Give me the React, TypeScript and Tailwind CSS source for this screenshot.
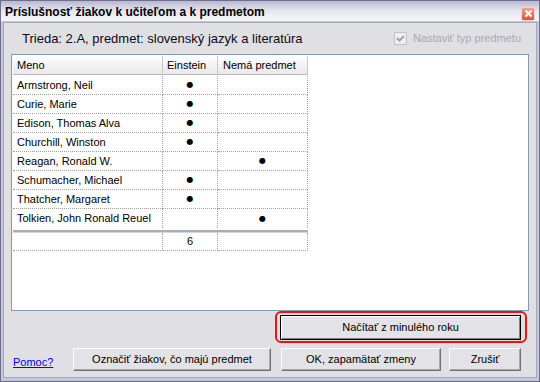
import type { ReactNode } from "react"

type Row = { name: string; einstein: boolean }

const rows: Row[] = [
  { name: "Armstrong, Neil", einstein: true },
  { name: "Curie, Marie", einstein: true },
  { name: "Edison, Thomas Alva", einstein: true },
  { name: "Churchill, Winston", einstein: true },
  { name: "Reagan, Ronald W.", einstein: false },
  { name: "Schumacher, Michael", einstein: true },
  { name: "Thatcher, Margaret", einstein: true },
  { name: "Tolkien, John Ronald Reuel", einstein: false },
]

function Dot() {
  return <span className="font-['DejaVu_Sans',sans-serif] text-[8px] leading-none">●</span>
}

function WinButton({
  children,
  className = "",
  focused = false,
}: {
  children: ReactNode
  className?: string
  focused?: boolean
}) {
  return (
    <button
      type="button"
      className={`flex items-center justify-center bg-[#e3e2e6] text-[11px] text-black ${
        focused
          ? "border border-black shadow-[inset_1px_1px_#ffffff,inset_-1px_-1px_#808080]"
          : "border border-t-white border-l-white border-r-[#6f6f74] border-b-[#6f6f74] shadow-[inset_-1px_-1px_#a8a8ae]"
      } ${className}`}
    >
      {children}
    </button>
  )
}

export default function App() {
  const count = rows.filter((r) => r.einstein).length

  return (
    <div className="w-[540px] h-[382px] flex flex-col bg-[#c7c7da] border border-[#6e6e92] font-['Liberation_Sans',Arial,sans-serif] text-black overflow-hidden">
      {/* Title bar */}
      <div className="h-[20px] flex items-center justify-between pl-[4px] pr-[4px] bg-gradient-to-b from-[#b9b9cf] via-[#e6e6ee] to-[#f6f6f9]">
        <span className="text-[12px] font-bold leading-none mt-[1px]">
          Príslušnosť žiakov k učiteľom a k predmetom
        </span>
        <span className="w-[14px] h-[14px] mt-[5px] flex items-center justify-center rounded-[2px] border border-[#f7d4cc] bg-gradient-to-b from-[#f0a08e] to-[#d5553c]">
          <svg width="9" height="9" viewBox="0 0 9 9">
            <path d="M1.5 1.5 L7.5 7.5 M7.5 1.5 L1.5 7.5" stroke="#ffffff" strokeWidth="2" />
          </svg>
        </span>
      </div>

      {/* Client area */}
      <div className="flex-1 mx-[2px] mb-[3px] mt-[1px] border border-[#a6a6bc] bg-[#e0dfe3] px-[7px] flex flex-col">
        <div className="h-[31px] flex items-center">
          <span className="ml-[11px] text-[13px] text-[#0b0b1a]">
            Trieda: 2.A, predmet: slovenský jazyk a literatúra
          </span>
          <div className="ml-auto mr-[8px] flex items-center">
            <span className="w-[13px] h-[13px] border border-[#c3c3c9] bg-[#eeeef0] flex items-center justify-center">
              <svg width="9" height="9" viewBox="0 0 9 9">
                <path d="M1 4 L3.5 6.5 L8 2" stroke="#a3a3a8" strokeWidth="2" fill="none" />
              </svg>
            </span>
            <span className="ml-[6px] text-[11px] text-[#a9a9b0]">Nastaviť typ predmetu</span>
          </div>
        </div>

        {/* Grid */}
        <div className="h-[257px] border border-[#7f9db9] bg-white pl-[1px] pt-[1px]">
          <div className="flex h-[20px]">
            <div className="w-[150px] h-[19px] border-b border-[#b6b6bb] border-r border-r-[#c8c8cc] bg-gradient-to-b from-white to-[#e8e8ea] pl-[4px] flex items-center text-[11px]">
              Meno
            </div>
            <div className="w-[55px] h-[19px] border-b border-[#b6b6bb] border-r border-r-[#c8c8cc] bg-gradient-to-b from-white to-[#e8e8ea] pl-[4px] flex items-center text-[11px]">
              Einstein
            </div>
            <div className="w-[90px] h-[19px] border-b border-[#b6b6bb] border-r border-r-[#c8c8cc] bg-gradient-to-b from-white to-[#e8e8ea] pl-[5px] flex items-center text-[11px]">
              Nemá predmet
            </div>
          </div>

          {rows.map((r, i) => {
            const last = i === rows.length - 1
            const line = last ? "" : "border-b border-dotted border-[#a0a0a0]"
            return (
              <div key={r.name} className="flex text-[11px]">
                <div className={`w-[150px] h-[19px] pl-[4px] flex items-center border-r border-dotted border-[#a0a0a0] ${line}`}>
                  {r.name}
                </div>
                <div className={`w-[55px] h-[19px] flex items-center justify-center border-r border-dotted border-[#a0a0a0] ${line}`}>
                  {r.einstein && <Dot />}
                </div>
                <div className={`w-[90px] h-[19px] flex items-center justify-center border-r border-dotted border-[#a0a0a0] ${line}`}>
                  {!r.einstein && <Dot />}
                </div>
              </div>
            )
          })}

          <div className="w-[295px] h-[2px]" />
          <div className="w-[295px] h-[3px] bg-[#a9adb5] border-b border-[#d4d6da]" />

          <div className="flex text-[11px]">
            <div className="w-[150px] h-[18px] border-r border-b border-dotted border-[#a0a0a0]" />
            <div className="w-[55px] h-[18px] flex items-center justify-center border-r border-b border-dotted border-[#a0a0a0]">
              {count}
            </div>
            <div className="w-[90px] h-[18px] border-r border-b border-dotted border-[#a0a0a0]" />
          </div>
        </div>

        {/* Load from last year */}
        <div className="flex justify-end">
          <div className="mr-[2px] border-2 border-[#ee1111] rounded-[6px] pl-[3px] pr-[4px] pt-[2px] pb-[1px]">
            <WinButton focused className="w-[241px] h-[25px]">
              Načítať z minulého roku
            </WinButton>
          </div>
        </div>

        {/* Bottom row */}
        <div className="mt-[5px] flex items-end">
          <a href="#" className="ml-[2px] mb-[1px] text-[11px] text-[#0000ff] underline">
            Pomoc?
          </a>
          <div className="ml-auto mr-[8px] flex gap-[8px]">
            <WinButton className="w-[198px] h-[23px] mr-[2px]">Označiť žiakov, čo majú predmet</WinButton>
            <WinButton className="w-[160px] h-[23px]">OK, zapamätať zmeny</WinButton>
            <WinButton className="w-[72px] h-[23px]">Zrušiť</WinButton>
          </div>
        </div>
      </div>
    </div>
  )
}
